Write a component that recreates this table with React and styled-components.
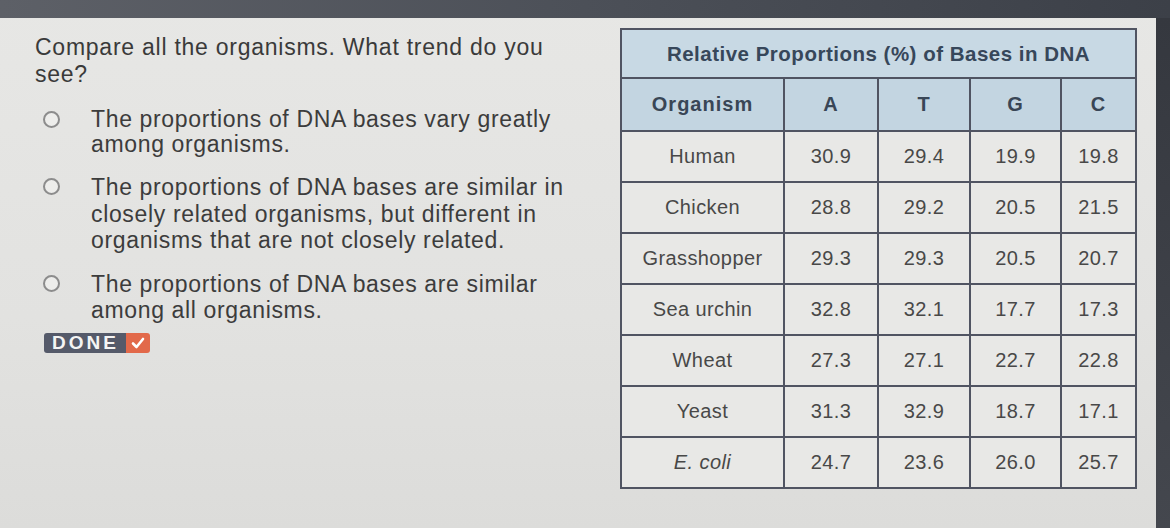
import React from "react";
import styled, { createGlobalStyle } from "styled-components";

const GlobalStyle = createGlobalStyle`
  html, body {
    margin: 0;
    padding: 0;
    background: #e3e3e1;
  }
  body {
    font-family: "Liberation Sans", Arial, sans-serif;
  }
`;

const Screen = styled.div`
  width: 1170px;
  height: 528px;
  display: flex;
  flex-direction: column;
  overflow: hidden;
  background: linear-gradient(180deg, #e7e7e5 0%, #e2e2e0 60%, #dcdcda 100%);
`;

const TopBar = styled.div`
  height: 18px;
  flex-shrink: 0;
  background: linear-gradient(90deg, #5d6067 0%, #4c5058 50%, #3c4048 100%);
`;

const Body = styled.div`
  flex: 1;
  display: flex;
`;

const Content = styled.div`
  flex: 1;
  display: flex;
`;

const EdgeStrip = styled.div`
  width: 14px;
  flex-shrink: 0;
  background: linear-gradient(180deg, #35383f 0%, #44474e 100%);
`;

const QuestionCol = styled.div`
  width: 585px;
  padding: 16px 0 0 35px;
  box-sizing: border-box;
  color: #3a3a3a;
`;

const Prompt = styled.div`
  font-size: 23px;
  line-height: 27px;
  letter-spacing: 0.75px;
  white-space: nowrap;
`;

const Options = styled.div`
  margin-top: 19px;
  display: flex;
  flex-direction: column;
  gap: 17px;
`;

const Option = styled.div`
  display: flex;
  align-items: flex-start;
`;

const Radio = styled.span`
  width: 13px;
  height: 13px;
  border: 2px solid #8c8c8c;
  border-radius: 50%;
  margin: 4px 31px 0 8px;
  flex-shrink: 0;
  background: #ededeb;
`;

const OptionText = styled.div`
  font-size: 23px;
  line-height: ${({ $lh }) => $lh}px;
  letter-spacing: 0.65px;
  white-space: nowrap;
  color: #3c3c3c;
`;

const DoneButton = styled.div`
  display: inline-flex;
  align-items: stretch;
  margin: 10px 0 0 9px;
  height: 20px;
  border-radius: 3px;
  overflow: hidden;
`;

const DoneLabel = styled.span`
  background: #555a6a;
  color: #f4f4f4;
  font-weight: bold;
  font-size: 19px;
  letter-spacing: 3px;
  line-height: 20px;
  padding: 0 7px 0 8px;
`;

const DoneCheck = styled.span`
  width: 24px;
  background: #e2694a;
  display: flex;
  align-items: center;
  justify-content: center;
`;

const TableCol = styled.div`
  padding: 10px 0 0 35px;
`;

const Table = styled.table`
  border-collapse: collapse;
  border: 2px solid #505462;
  font-size: 20px;
  letter-spacing: 0.4px;
  color: #484848;
  text-align: center;
`;

const TitleCell = styled.th`
  height: 45px;
  background: #c8d9e4;
  color: #37475a;
  font-size: 20.5px;
  letter-spacing: 0.5px;
  font-weight: bold;
  border: 2px solid #505462;
`;

const HeadCell = styled.th`
  height: 49px;
  background: #c3d5e1;
  color: #394656;
  font-size: 20px;
  letter-spacing: 1px;
  font-weight: bold;
  border: 2px solid #505462;
  width: ${({ $w }) => $w}px;
`;

const Cell = styled.td`
  height: 47px;
  background: #e8e8e6;
  border: 2px solid #505462;
  font-style: ${({ $italic }) => ($italic ? "italic" : "normal")};
`;

const rows = [
  ["Human", "30.9", "29.4", "19.9", "19.8"],
  ["Chicken", "28.8", "29.2", "20.5", "21.5"],
  ["Grasshopper", "29.3", "29.3", "20.5", "20.7"],
  ["Sea urchin", "32.8", "32.1", "17.7", "17.3"],
  ["Wheat", "27.3", "27.1", "22.7", "22.8"],
  ["Yeast", "31.3", "32.9", "18.7", "17.1"],
  ["E. coli", "24.7", "23.6", "26.0", "25.7"],
];

const App = () => {
  return (
    <Screen>
      <GlobalStyle />
      <TopBar />
      <Body>
        <Content>
          <QuestionCol>
            <Prompt>
              Compare all the organisms. What trend do you
              <br />
              see?
            </Prompt>
            <Options>
              <Option>
                <Radio />
                <OptionText $lh={25}>
                  The proportions of DNA bases vary greatly
                  <br />
                  among organisms.
                </OptionText>
              </Option>
              <Option>
                <Radio />
                <OptionText $lh={26.5}>
                  The proportions of DNA bases are similar in
                  <br />
                  closely related organisms, but different in
                  <br />
                  organisms that are not closely related.
                </OptionText>
              </Option>
              <Option>
                <Radio />
                <OptionText $lh={26}>
                  The proportions of DNA bases are similar
                  <br />
                  among all organisms.
                </OptionText>
              </Option>
            </Options>
            <DoneButton>
              <DoneLabel>DONE</DoneLabel>
              <DoneCheck>
                <svg width="14" height="12" viewBox="0 0 14 12">
                  <path
                    d="M2 6.5 L5.5 10 L12 2"
                    fill="none"
                    stroke="#ffffff"
                    strokeWidth="2.6"
                    strokeLinecap="round"
                    strokeLinejoin="round"
                  />
                </svg>
              </DoneCheck>
            </DoneButton>
          </QuestionCol>
          <TableCol>
            <Table>
              <thead>
                <tr>
                  <TitleCell colSpan={5}>Relative Proportions (%) of Bases in DNA</TitleCell>
                </tr>
                <tr>
                  <HeadCell $w={159}>Organism</HeadCell>
                  <HeadCell $w={90}>A</HeadCell>
                  <HeadCell $w={88}>T</HeadCell>
                  <HeadCell $w={87}>G</HeadCell>
                  <HeadCell $w={71}>C</HeadCell>
                </tr>
              </thead>
              <tbody>
                {rows.map((r) => (
                  <tr key={r[0]}>
                    {r.map((v, i) => (
                      <Cell key={i} $italic={r[0] === "E. coli" && i === 0}>
                        {v}
                      </Cell>
                    ))}
                  </tr>
                ))}
              </tbody>
            </Table>
          </TableCol>
        </Content>
        <EdgeStrip />
      </Body>
    </Screen>
  );
};

export default App;
